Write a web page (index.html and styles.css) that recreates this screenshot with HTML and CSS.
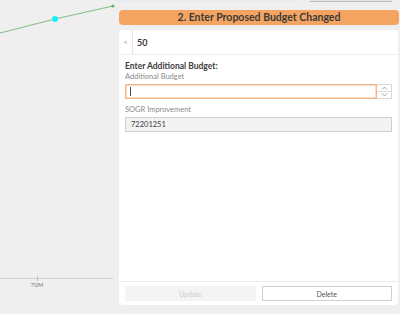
FILE: index.html
```html
<!DOCTYPE html>
<html lang="en">
<head>
    <meta charset="UTF-8">
    <meta name="viewport" content="width=device-width, initial-scale=1.0">
    <title>Budget edit</title>
    <link rel="stylesheet" href="styles.css">
</head>
<body>

    <div class="chart">
        <svg width="119" height="314" viewBox="0 0 119 314">
            <polyline points="0,33 55,19 113,6" fill="none" stroke="#86c08a" stroke-width="1.2"/>
            <circle cx="113" cy="6" r="1.6" fill="#6aaf6e"/>
            <circle cx="55" cy="19" r="3" fill="#19f0f5"/>
            <line x1="0" y1="278.5" x2="113" y2="278.5" stroke="#cfcfcf" stroke-width="1"/>
            <line x1="37.5" y1="276" x2="37.5" y2="281" stroke="#bdbdbd" stroke-width="1"/>
            <text x="37" y="287" class="tick">70M</text>
        </svg>
    </div>

    <div class="panel">
        <!-- bottom of the toolbar above, scrolled off -->
        <div class="topbar">
            <div class="topbar-input"></div>
            <div class="topbar-btn"></div>
        </div>

        <div class="step-title">2. Enter Proposed Budget Changed</div>

        <div class="card">
            <div class="card-head">
                <span class="back">&lt;</span>
                <span class="record">50</span>
            </div>

            <div class="card-body">
                <div class="section-title">Enter Additional Budget:</div>
                <label class="field-label">Additional Budget</label>
                <div class="number-input">
                    <div class="number-box"><span class="caret"></span></div>
                    <div class="spinner">
                        <span><svg width="7" height="4" viewBox="0 0 7 4"><polyline points="1,3.5 3.5,1 6,3.5" fill="none" stroke="#8a8a8a" stroke-width="0.8"/></svg></span>
                        <span><svg width="7" height="4" viewBox="0 0 7 4"><polyline points="1,0.5 3.5,3 6,0.5" fill="none" stroke="#8a8a8a" stroke-width="0.8"/></svg></span>
                    </div>
                </div>

                <label class="field-label">SOGR Improvement</label>
                <div class="readonly-input">72201251</div>
            </div>

            <div class="card-foot">
                <button class="btn btn-disabled">Update</button>
                <button class="btn">Delete</button>
            </div>
        </div>
    </div>

</body>
</html>
```

FILE: styles.css
```css
body {
    margin: 0;
    height: 314px;
    overflow: hidden;
    display: flex;
    background-color: #efefef;
    font-family: Lato, "Open Sans", sans-serif;
    color: #323232;
}

.chart {
    width: 119px;
    flex-shrink: 0;
}

.chart svg {
    display: block;
}

.tick {
    font-family: Lato, sans-serif;
    font-size: 6px;
    fill: #777;
    text-anchor: middle;
}

.panel {
    width: 280px;
    display: flex;
    flex-direction: column;
}

.topbar {
    display: flex;
    height: 2px;
}

.topbar-input {
    width: 185px;
    margin-left: -4px;
    background: #e6ecf0;
}

.topbar-btn {
    width: 82px;
    margin-left: 10px;
    background: #e3e3e3;
    border-bottom: 1px solid #bdbdbd;
    height: 1px;
}

.step-title {
    margin-top: 8px;
    height: 15px;
    line-height: 15px;
    background: #f4a460;
    border-radius: 4px;
    text-align: center;
    font-size: 10.5px;
    font-weight: bold;
    color: #3a3a3a;
}

.card {
    margin-top: 5px;
    margin-right: 1px;
    height: 275px;
    background: #fff;
    border-radius: 4px;
    display: flex;
    flex-direction: column;
}

.card-head {
    display: flex;
    height: 24px;
    align-items: stretch;
    border-bottom: 1px solid #eeeeee;
    font-size: 9px;
}

.back {
    width: 13px;
    border-right: 1px solid #e6e6e6;
    color: #9a9a9a;
    font-size: 8px;
    display: flex;
    align-items: center;
    justify-content: center;
}

.record {
    padding-left: 4px;
    display: flex;
    align-items: center;
    font-weight: bold;
    color: #3c3c3c;
}

.card-body {
    flex: 1;
    padding: 6px 6px 0 6px;
}

.section-title {
    font-size: 8.5px;
    font-weight: bold;
    color: #3c3c3c;
    line-height: 10px;
    margin-bottom: 1px;
}

.field-label {
    display: block;
    font-size: 7.5px;
    color: #8a8a8a;
    line-height: 10px;
    margin-bottom: 2px;
}

.number-input {
    display: flex;
    height: 15px;
    margin-bottom: 6px;
}

.number-box {
    flex: 1;
    border: 1px solid #f4b58a;
    box-shadow: inset 0 0 0 1px #fbd9c2;
    display: flex;
    align-items: center;
    padding-left: 4px;
}

.caret {
    width: 1px;
    height: 9px;
    background: #4a4a4a;
}

.spinner {
    width: 15px;
    display: flex;
    flex-direction: column;
    border: 1px solid #d8d8d8;
    border-left: none;
    box-sizing: border-box;
}

.spinner span {
    flex: 1;
    display: flex;
    align-items: center;
    justify-content: center;
}

.spinner span + span {
    border-top: 1px solid #e0e0e0;
}

.spinner svg {
    display: block;
}

.readonly-input {
    height: 15px;
    box-sizing: border-box;
    border: 1px solid #cfcfcf;
    background: #f3f3f3;
    font-size: 7.5px;
    line-height: 13px;
    padding-left: 5px;
    color: #3c3c3c;
}

.card-foot {
    display: flex;
    gap: 6px;
    padding: 4px 6px 4px 6px;
    border-top: 1px solid #ececec;
}

.btn {
    flex: 1;
    height: 15px;
    font-family: Lato, sans-serif;
    font-size: 7px;
    background: #fff;
    border: 1px solid #cfcfcf;
    color: #555;
    padding: 0;
}

.btn-disabled {
    background: #f4f4f4;
    border-color: #f4f4f4;
    color: #cdcdcd;
}
```
